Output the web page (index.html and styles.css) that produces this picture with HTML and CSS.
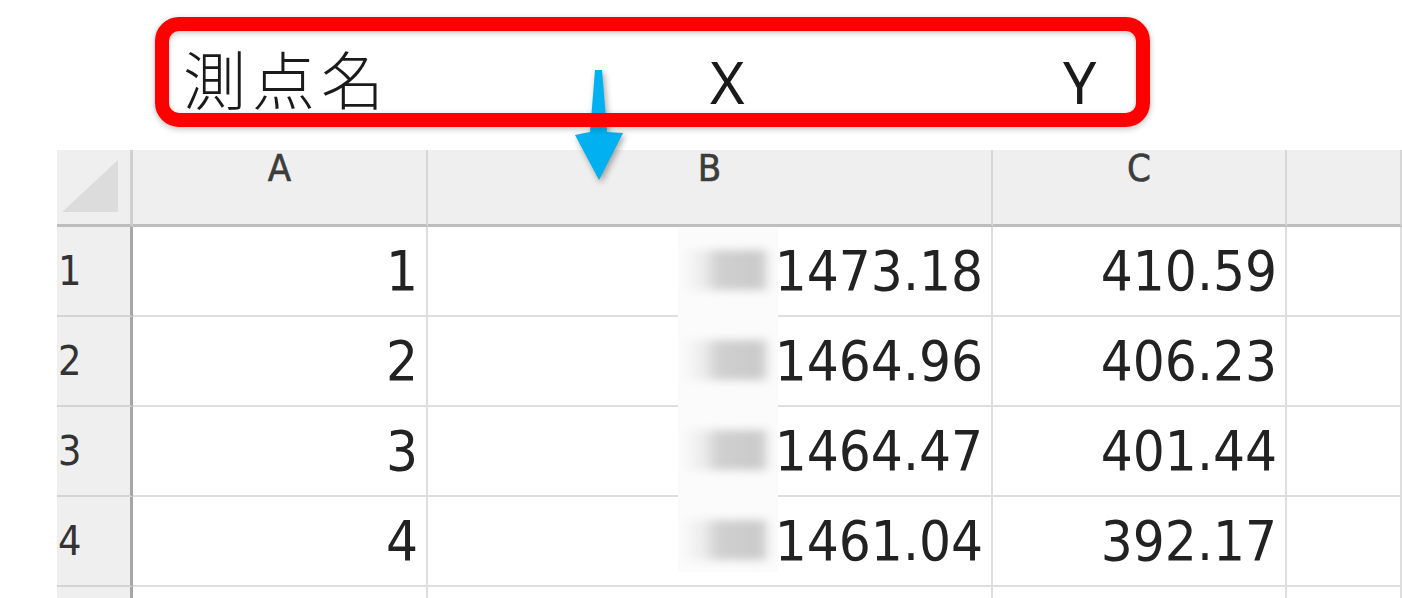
FILE: index.html
```html
<!DOCTYPE html>
<html lang="ja">
<head>
    <meta charset="UTF-8">
    <meta name="viewport" content="width=device-width, initial-scale=1.0">
    <title>測点名 X Y</title>
    <link rel="stylesheet" href="styles.css">
</head>
<body>
    <div class="callout">
        <div class="callout-panel">
            <span class="label label-name">測点名</span>
            <span class="label label-axis">X</span>
            <span class="label label-axis">Y</span>
        </div>
        <svg class="arrow" viewBox="0 0 48 110" xmlns="http://www.w3.org/2000/svg">
            <polygon points="20,0 27,0 32,62 48,63 24,110 0,65 15,62" fill="#00b0f0"></polygon>
        </svg>
    </div>

    <div class="sheet">
        <div class="corner"><span class="corner-mark"></span></div>
        <div class="col-head">A</div>
        <div class="col-head">B</div>
        <div class="col-head">C</div>
        <div class="col-head"></div>

        <div class="row-head">1</div>
        <div class="cell">1</div>
        <div class="cell">1473.18</div>
        <div class="cell">410.59</div>
        <div class="cell"></div>

        <div class="row-head">2</div>
        <div class="cell">2</div>
        <div class="cell">1464.96</div>
        <div class="cell">406.23</div>
        <div class="cell"></div>

        <div class="row-head">3</div>
        <div class="cell">3</div>
        <div class="cell">1464.47</div>
        <div class="cell">401.44</div>
        <div class="cell"></div>

        <div class="row-head">4</div>
        <div class="cell">4</div>
        <div class="cell">1461.04</div>
        <div class="cell">392.17</div>
        <div class="cell"></div>

        <div class="row-head"></div>
        <div class="cell"></div>
        <div class="cell"></div>
        <div class="cell"></div>
        <div class="cell"></div>

        <!-- blurred-out leading digits of column B -->
        <div class="mask">
            <span class="smudge"></span>
            <span class="smudge"></span>
            <span class="smudge"></span>
            <span class="smudge"></span>
        </div>
    </div>
</body>
</html>
```

FILE: styles.css
```css
:root {
    --frame-red: #ff0000;
    --arrow-blue: #00b0f0;
    --head-bg: #efefef;
    --grid-line: #dedede;
    --text-color: #222;
}

* {
    margin: 0;
    padding: 0;
    box-sizing: border-box;
}

body {
    background-color: #fff;
    color: var(--text-color);
    overflow: hidden;
    height: 598px;
}

/* callout with the header labels */
.callout {
    position: relative;
    width: 995px;
    height: 110px;
    margin: 17px 0 0 155px;
    padding: 14px;
}

.callout::after {
    content: "";
    position: absolute;
    inset: 0;
    border: 14px solid var(--frame-red);
    border-radius: 24px;
    box-shadow: 0 2px 6px rgba(0, 0, 0, 0.25);
    z-index: 2;
}

.callout-panel {
    height: 100%;
    background-color: #fff;
    border-radius: 10px;
    box-shadow: inset 0 4px 6px -2px rgba(0, 0, 0, 0.18), inset 0 0 5px rgba(0, 0, 0, 0.12);
    display: grid;
    grid-template-columns: 527px 353px auto;
    align-items: baseline;
    padding: 14px 0 0 14px;
}

.label {
    line-height: 1;
    color: #1a1a1a;
}

.label-name {
    font-family: "Noto Sans CJK JP", "Noto Sans", sans-serif;
    font-weight: 300;
    font-size: 63px;
    letter-spacing: 6px;
}

.label-axis {
    font-family: "Noto Sans", "Liberation Sans", sans-serif;
    font-size: 59px;
}

.arrow {
    position: absolute;
    left: 420px;
    top: 53px;
    width: 48px;
    height: 110px;
    z-index: 1;
    filter: drop-shadow(2px 3px 3px rgba(0, 0, 0, 0.35));
}

/* spreadsheet */
.sheet {
    position: relative;
    margin: 23px 0 0 57px;
    display: grid;
    grid-template-columns: 76px 295px 565px 294px 1fr;
    grid-template-rows: 77px repeat(4, 90px) 40px;
    font-family: "DejaVu Sans Condensed", "DejaVu Sans", sans-serif;
    font-stretch: semi-condensed;
}

.corner {
    position: relative;
    background-color: var(--head-bg);
    border-right: 3px solid #cfcfcf;
    border-bottom: 3px solid #bdbdbd;
}

.corner-mark {
    position: absolute;
    left: 5px;
    top: 10px;
    width: 56px;
    height: 52px;
    background-color: #dcdcdc;
    clip-path: polygon(100% 0, 100% 100%, 0 100%);
}

.col-head {
    background-color: var(--head-bg);
    border-right: 2px solid #d6d6d6;
    border-bottom: 3px solid #bdbdbd;
    text-align: center;
    font-family: "DejaVu Sans", sans-serif;
    font-size: 38px;
    line-height: 37px;
    -webkit-text-stroke: 0.6px #3c3c3c;
    color: #3c3c3c;
}

.row-head {
    background-color: var(--head-bg);
    border-right: 3px solid #a6a6a6;
    border-bottom: 2px solid #d4d4d4;
    padding-left: 1px;
    font-size: 41px;
    line-height: 88px;
    color: #333;
}

.cell {
    border-right: 2px solid var(--grid-line);
    border-bottom: 2px solid var(--grid-line);
    text-align: right;
    padding-right: 8px;
    font-size: 56px;
    line-height: 88px;
    color: var(--text-color);
}

.mask {
    position: absolute;
    left: 621px;
    top: 78px;
    width: 100px;
    height: 344px;
    background-color: #fbfbfb;
    display: flex;
    flex-direction: column;
    gap: 50px;
    padding: 22px 8px 0 4px;
}

.smudge {
    display: block;
    height: 40px;
    background: linear-gradient(to right, rgba(230, 230, 230, 0), #ebebeb 25%, #d0d0d0 42%, #cacaca 88%, rgba(220, 220, 220, 0.4));
    filter: blur(4px);
}
```
